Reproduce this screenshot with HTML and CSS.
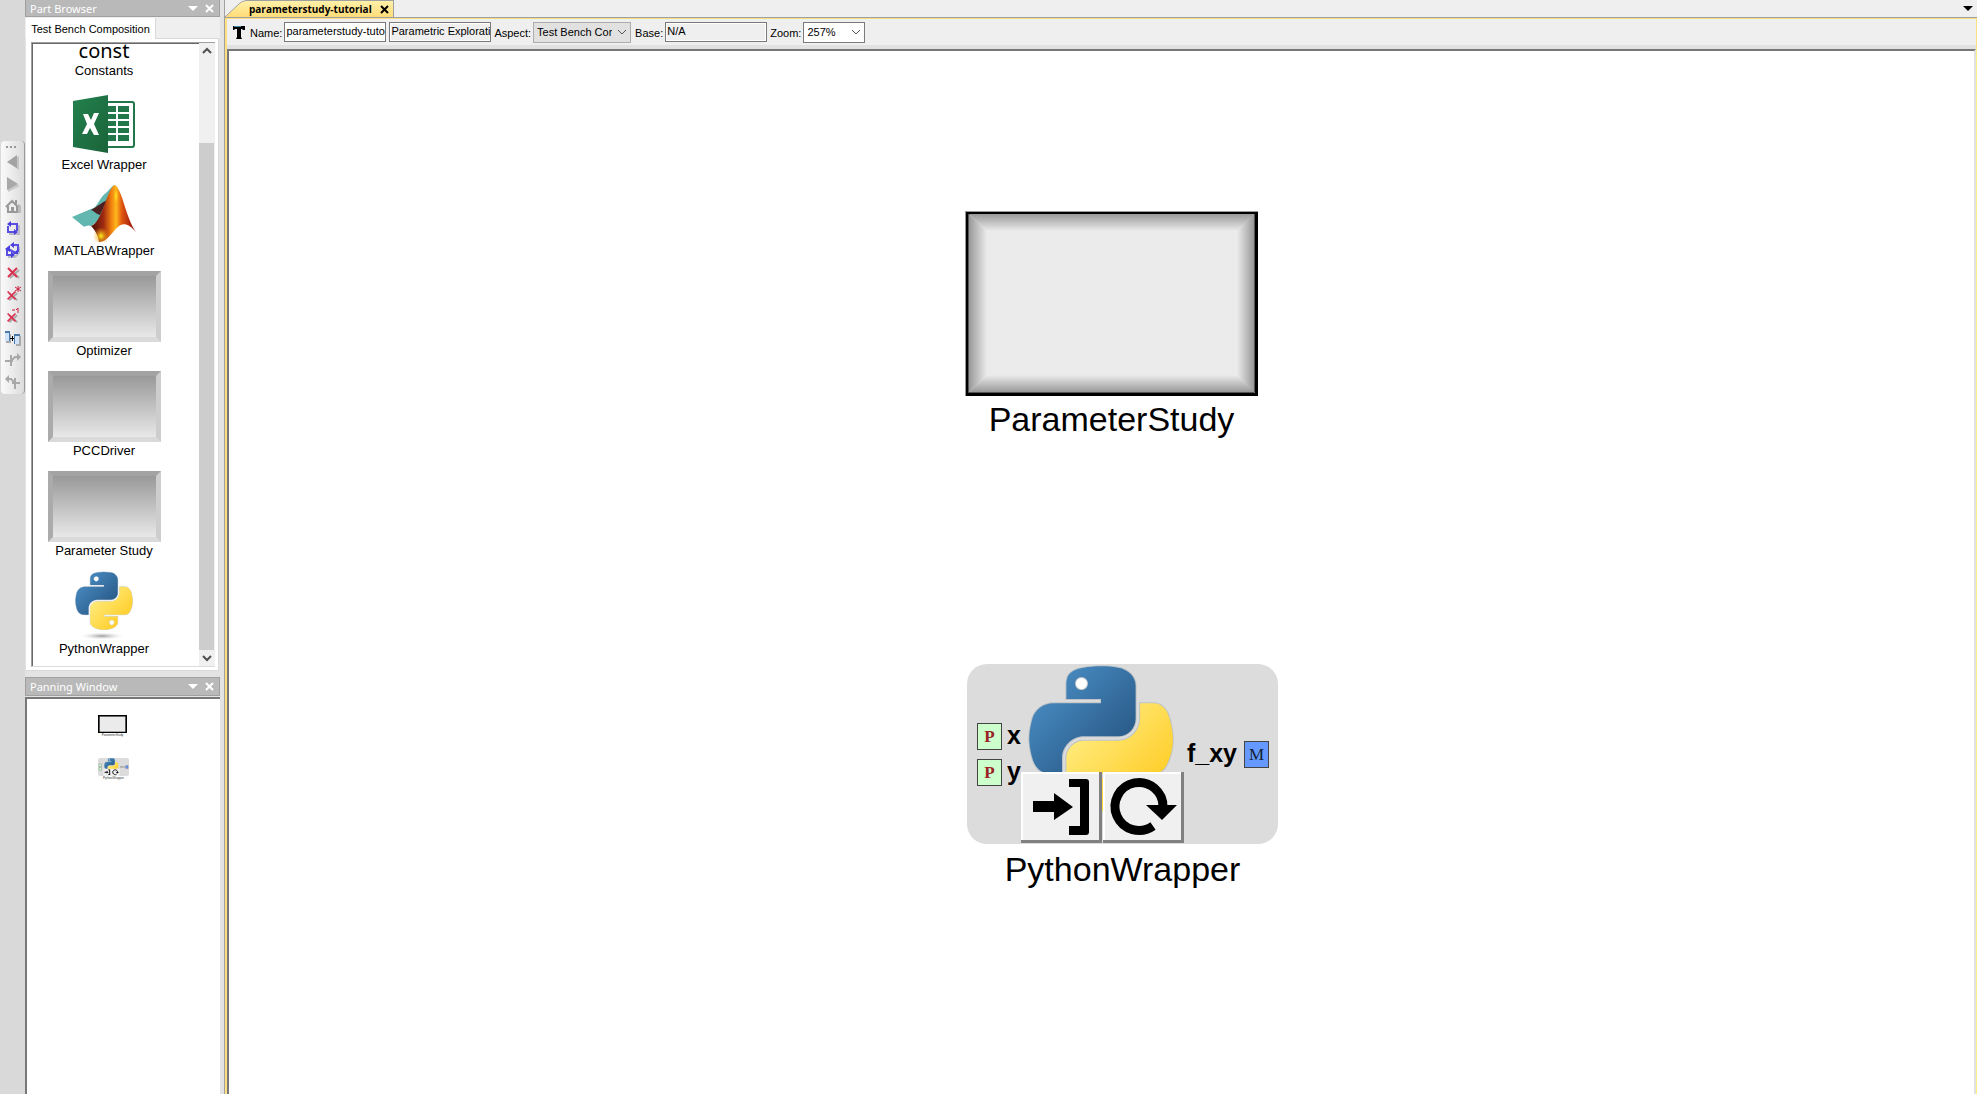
FILE: index.html
```html
<!DOCTYPE html>
<html lang="en">
<head>
<meta charset="utf-8">
<title>parameterstudy-tutorial</title>
<link rel="stylesheet" href="styles.css">
</head>
<body>
<svg class="defs" aria-hidden="true">
  <defs>
    <linearGradient id="blue" x1="0" y1="0" x2="1" y2="1"><stop offset=".1" stop-color="#4b8fc6"/><stop offset=".75" stop-color="#2c5f8e"/></linearGradient>
    <linearGradient id="yellow" x1="0" y1="0" x2="1" y2="1"><stop offset=".15" stop-color="#ffec80"/><stop offset=".75" stop-color="#ffd030"/></linearGradient>
    <linearGradient id="excel" x1="0" y1="0" x2="1" y2="1"><stop offset="0" stop-color="#22814d"/><stop offset="1" stop-color="#1b633a"/></linearGradient>
    <linearGradient id="peak" x1="0" x2="1" y1="0" y2="0"><stop offset="0" stop-color="#4a100c"/><stop offset=".28" stop-color="#a02a10"/><stop offset=".45" stop-color="#f08010"/><stop offset=".56" stop-color="#ffb81c"/><stop offset=".68" stop-color="#e05a10"/><stop offset=".85" stop-color="#b52a10"/><stop offset="1" stop-color="#8c1c10"/></linearGradient>
    <radialGradient id="glow"><stop offset="0" stop-color="#fff020"/><stop offset="1" stop-color="#ff9010" stop-opacity="0"/></radialGradient>
    <radialGradient id="shade"><stop offset="0" stop-color="#999"/><stop offset="1" stop-color="#fff" stop-opacity="0"/></radialGradient>
    <linearGradient id="edgeT" x1="0" y1="0" x2="0" y2="1"><stop offset="0" stop-color="#999"/><stop offset="1" stop-color="#ebebeb"/></linearGradient>
    <linearGradient id="edgeB" x1="0" y1="1" x2="0" y2="0"><stop offset="0" stop-color="#999"/><stop offset="1" stop-color="#ebebeb"/></linearGradient>
    <linearGradient id="edgeL" x1="0" y1="0" x2="1" y2="0"><stop offset="0" stop-color="#999"/><stop offset="1" stop-color="#ebebeb"/></linearGradient>
    <linearGradient id="edgeR" x1="1" y1="0" x2="0" y2="0"><stop offset="0" stop-color="#999"/><stop offset="1" stop-color="#ebebeb"/></linearGradient>
    <symbol id="python" viewBox="-1 -1 113 113">
      <circle cx="40.400" cy="13.300" r="6" fill="#fff"/><circle cx="70.600" cy="98.400" r="6" fill="#fff"/>
      <g stroke="#bdc3c8" stroke-width="1.500" paint-order="stroke">
      <path fill="url(#blue)" d="M54.919 0C50.335.022 45.958.413 42.106 1.095 30.760 3.099 28.700 7.295 28.700 15.032v10.219h26.813v3.406H18.638c-7.793 0-14.616 4.684-16.750 13.594-2.462 10.213-2.571 16.586 0 27.250 1.906 7.938 6.457 13.594 14.250 13.594h9.219v-12.250c0-8.850 7.657-16.656 16.750-16.656h26.781c7.455 0 13.406-6.138 13.406-13.625V15.032c0-7.266-6.130-12.725-13.406-13.937C64.282.328 59.502-.02 54.919 0zm-14.500 8.220c2.770 0 5.031 2.298 5.031 5.124 0 2.817-2.261 5.094-5.031 5.094-2.779 0-5.031-2.277-5.031-5.094 0-2.826 2.252-5.125 5.031-5.125z"/>
      <path fill="url(#yellow)" d="M85.638 28.657v11.906c0 9.231-7.826 17-16.750 17H42.106c-7.336 0-13.406 6.279-13.406 13.625v25.531c0 7.267 6.319 11.541 13.406 13.625 8.488 2.496 16.626 2.947 26.782 0 6.750-1.954 13.406-5.887 13.406-13.625V86.501H55.513v-3.406H95.700c7.792 0 10.696-5.436 13.406-13.594 2.799-8.399 2.680-16.476 0-27.250-1.926-7.757-5.604-13.594-13.406-13.594zm-15.063 64.656c2.780 0 5.031 2.278 5.031 5.094 0 2.827-2.251 5.125-5.031 5.125-2.770 0-5.031-2.298-5.031-5.125 0-2.816 2.261-5.094 5.031-5.094z"/>
      </g>
    </symbol>
    <symbol id="bevel" viewBox="0 0 293 185">
      <path fill="#999" d="M0 0h293v185H0z"/><path d="M1 1h292v184H1z"/>
      <path fill="#ebebeb" d="M4 4h286v178H4z"/>
      <path fill="url(#edgeT)" d="M4 3h286l-18 17H22z"/><path fill="url(#edgeB)" d="M4 181h286l-18-17H22z"/>
      <path fill="url(#edgeL)" d="M4 3v178l18-17V20z"/><path fill="url(#edgeR)" d="M289 3v178l-17-17V20z"/>
      <path fill="none" stroke="#555" d="M3.500 3v178.500h286V3"/>
    </symbol>
    <symbol id="enter" viewBox="0 0 81 71"><path d="M12 29h21v-8l19 14-19 13v-8H12zM48 7h17q3 0 3 3v50q0 3-3 3H48v-9h11V15H48z"/></symbol>
    <symbol id="cycle" viewBox="0 0 81 71"><path fill="none" stroke="#000" stroke-width="9" d="M50 54A24 24 0 1 1 60 35"/><path d="M43 33h31L59 48z"/></symbol>
    <symbol id="cross" viewBox="0 0 16 16"><path fill="none" stroke="#aaa" stroke-width="2" d="M5 6l9 8M14 6l-9 8"/><path fill="none" stroke="#dc3050" stroke-width="2" d="M3 4l9 9M12 4l-9 9"/></symbol>
    <symbol id="close" viewBox="0 0 9 9"><path fill="none" stroke="currentColor" stroke-width="2" d="M1 1l7 7M8 1L1 8"/></symbol>
    <symbol id="down" viewBox="0 0 10 5"><path fill="currentColor" d="M0 0h10L5 5z"/></symbol>
  </defs>
</svg>

<div class="app">
  <div class="gutter">
    <div class="tools" role="toolbar" aria-label="Navigation">
      <span class="grip"><i></i><i></i><i></i></span>
      <button aria-label="Back"><svg viewBox="0 0 16 16"><path fill="#c4c4c4" d="M14 2v14L4 9z"/><path fill="#a3a3a3" d="M12 1v13L2 8z"/></svg></button>
      <button aria-label="Forward"><svg viewBox="0 0 16 16"><path fill="#c9c9c9" d="M3 3v13l12-6z"/><path fill="#a8a8a8" d="M2 1v13l11-6z"/></svg></button>
      <button aria-label="Home"><svg viewBox="0 0 16 16"><path fill="#bbb" d="M4 15h12V8l-2-2z"/><path fill="#eee" stroke="#999" stroke-width="2" d="M3 8v6h9V8L7 3 1 9M7 3l6 6M11 6V2"/><path fill="#999" d="M6 9h3v5H6z"/></svg></button>
      <button aria-label="Refresh"><svg viewBox="0 0 16 16"><path fill="none" stroke="#b9b9c8" stroke-width="2" d="M4 14h10V5"/><path fill="none" stroke="#5a4fe0" stroke-width="2" d="M5 4h7v7M3 6v6h8"/><path fill="#4a3fdc" d="M2 4l4-3v6zM13 12L9 9v6z"/></svg></button>
      <button aria-label="Refresh all"><svg viewBox="0 0 16 16"><path fill="none" stroke="#b9b9c8" stroke-width="2" d="M3 15h7l4-4V5"/><path fill="none" stroke="#5a4fe0" stroke-width="2" d="M7 3h6v7M2 7v6h6M3 7l8 4"/><path fill="#4a3fdc" d="M5 3l4-3v6zM0 7l5-4v7zM13 12H8l5-5zM10 13l-4-4v7z"/></svg></button>
      <button aria-label="Delete"><svg><use href="#cross"/></svg></button>
      <button aria-label="Delete all"><svg viewBox="0 0 16 16"><use href="#cross" y="2" width="14" height="14"/><path stroke="#d02040" d="M13 0v6M10 1l6 4M16 1l-6 4"/></svg></button>
      <button aria-label="Delete last"><svg viewBox="0 0 16 16"><use href="#cross" y="2" width="14" height="14"/><path fill="none" stroke="#d02040" d="M7 2h3M11 2l2-2v5"/></svg></button>
      <button aria-label="Connect"><svg viewBox="0 0 16 16"><path fill="#aaa" d="M1 4h5v9H1zM11 6h5v10h-5z"/><path fill="#cfe2f8" d="M0 2h4v9H0zM10 5h4v9h-4z"/><path fill="#4a78a8" d="M0 1h5v2H0zM9 4h6v2H9zM4 2h1v9H4zM9 5h1v9H9z"/><path stroke="#000" d="M5 8.500h4M7.500 6v5"/></svg></button>
      <button aria-label="Connect right"><svg viewBox="0 0 16 16"><path fill="none" stroke="#a8a8a8" stroke-width="2" d="M0 9h8M6 3v11M7 8l3-3h3"/><path fill="#a8a8a8" d="M16 5l-4-4v8z"/></svg></button>
      <button aria-label="Connect left"><svg viewBox="0 0 16 16"><path fill="none" stroke="#a8a8a8" stroke-width="2" d="M7 9h8M10 4v11M9 8L6 5H2"/><path fill="#a8a8a8" d="M0 5l4-4v8z"/></svg></button>
    </div>
  </div>

  <aside class="dock">
    <section class="browser">
      <header class="caption"><h2>Part Browser</h2><button aria-label="Part Browser menu"><svg class="tri"><use href="#down"/></svg></button><button aria-label="Close Part Browser"><svg class="x"><use href="#close"/></svg></button></header>
      <div class="tabs"><button class="tab">Test Bench Composition</button></div>
      <div class="frame">
        <div class="list">
          <ul class="parts">
            <li><span class="const">const</span><span>Constants</span></li>
            <li><svg class="excel" viewBox="0 0 62 65">
              <path fill="#fff" stroke="#21774a" stroke-width="2" d="M34 11h25q2 0 2 2v41q0 2-2 2H34z"/>
              <path fill="#21774a" d="M34 15h9v6h-9zM45 15h11v6H45zM34 23h9v5h-9zM45 23h11v5H45zM34 30h9v5h-9zM45 30h11v5H45zM34 37h9v5h-9zM45 37h11v5H45zM34 44h9v6h-9zM45 44h11v6H45z"/>
              <path fill="url(#excel)" d="M0 10l35-6v58L0 56z"/>
              <path fill="#fff" d="M10 23h5l3 6 3-7h5l-5 11 5 11h-5l-4-7-3 6H9l5-10z"/></svg><span>Excel Wrapper</span></li>
            <li><svg class="matlab" viewBox="0 0 64 57">
              <path fill="#62b8b0" d="M0 32l19-8c7-1 8-12 16-17C39 3 41 0 43 0l-6 17-8 17-10 7c-4-2-6 2-8 0z"/>
              <path fill="#4c2020" d="M19 25c7-4 10-7 16-10l-7 15c-4-1-6-4-9-5z"/>
              <path fill="url(#peak)" d="M43 0c8 6 10 31 21 47-7-8-13-10-18-5-7 6-11 15-19 15-1-7-4-12-8-16 12-4 16-39 24-41z"/>
              <ellipse cx="29" cy="51" rx="8" ry="9" fill="url(#glow)"/><ellipse cx="44" cy="11" rx="3" ry="11" fill="url(#glow)"/></svg><span>MATLABWrapper</span></li>
            <li><i class="box"></i><span>Optimizer</span></li>
            <li><i class="box"></i><span>PCCDriver</span></li>
            <li><i class="box"></i><span>Parameter Study</span></li>
            <li><svg class="snake" viewBox="0 0 58 69"><use href="#python" width="58" height="59"/><ellipse cx="27" cy="65" rx="24" ry="4" fill="url(#shade)"/></svg><span>PythonWrapper</span></li>
          </ul>
          <div class="scroll"><svg viewBox="0 0 15 16"><path d="M4 10l4-4 4 4"/></svg><i class="thumb"></i><svg viewBox="0 0 15 16"><path d="M4 6l4 4 4-4"/></svg></div>
        </div>
      </div>
    </section>
    <section class="panning">
      <header class="caption"><h2>Panning Window</h2><button aria-label="Panning Window menu"><svg class="tri"><use href="#down"/></svg></button><button aria-label="Close Panning Window"><svg class="x"><use href="#close"/></svg></button></header>
      <div class="overview">
        <div class="mini mini-study"><svg viewBox="0 0 293 185"><use href="#bevel"/><path fill="none" stroke="#000" stroke-width="16" d="M8 8h277v169H8z"/></svg><span>ParameterStudy</span></div>
        <div class="mini mini-python"><svg viewBox="0 0 311 180"><rect width="311" height="180" rx="20" fill="#dcdcdc"/><use href="#python" x="61" y="1" width="146" height="146"/><path fill="#cfc" stroke="#555" stroke-width="3" d="M10 59h25v27H10zM10 95h25v27H10z"/><path fill="#69f" stroke="#444" stroke-width="3" d="M278 77h24v27h-24z"/><path stroke="#777" stroke-width="8" d="M220 90h50"/><path fill="#f0f0f0" d="M54 108h163v71H54z"/><use href="#enter" x="54" y="108" width="81" height="71"/><use href="#cycle" x="136" y="108" width="81" height="71"/></svg><span>PythonWrapper</span></div>
      </div>
    </section>
  </aside>

  <main class="document">
    <div class="doc-tabs">
      <div class="doc-tab"><svg class="slope" viewBox="0 0 20 17"><defs><linearGradient id="tabfill" x1="0" y1="0" x2="0" y2="1"><stop offset="0" stop-color="#fff0a8"/><stop offset="1" stop-color="#ffdc78"/></linearGradient></defs><path fill="url(#tabfill)" d="M0 17L15 3q2-2 5-2v16z"/><path fill="none" stroke="#a0a0a0" d="M0 17L15 3q2-2 5-2"/></svg><span class="doc-name">parameterstudy-tutorial<button aria-label="Close document"><svg class="x"><use href="#close"/></svg></button></span></div>
      <button class="more" aria-label="Open documents"><svg class="tri"><use href="#down"/></svg></button>
    </div>
    <form class="props">
      <svg class="type" viewBox="0 0 12 13"><path d="M0 0h12v4h-2l-1-1H8v8l1 2H3l1-2V3H2L1 4H0z"/><path fill="#48a" d="M1 0h7v1H1z"/></svg>
      <label for="name">Name:</label><input id="name" value="parameterstudy-tutorial">
      <input class="dim" aria-label="Kind" value="Parametric Exploration" readonly>
      <label for="aspect">Aspect:</label><span class="pick dim"><select id="aspect"><option>Test Bench Composition</option></select><svg viewBox="0 0 9 5"><path d="M1 0l4 4 4-4"/></svg></span>
      <label for="base">Base:</label><input id="base" class="dim" value="N/A" readonly>
      <label for="zoom">Zoom:</label><span class="pick zoom"><select id="zoom"><option>257%</option></select><svg viewBox="0 0 9 5"><path d="M1 0l4 4 4-4"/></svg></span>
    </form>
    <div class="canvas">
      <div class="node study"><svg viewBox="0 0 293 185"><use href="#bevel"/></svg><span class="title">ParameterStudy</span></div>
      <div class="node wrapper">
        <div class="body">
          <svg class="logo"><use href="#python"/></svg>
          <div class="ports"><span class="port"><b class="pin">P</b>x</span><span class="port"><b class="pin">P</b>y</span></div>
          <span class="port out">f_xy<b class="pin metric">M</b></span>
          <div class="actions"><button aria-label="Open"><svg><use href="#enter"/></svg></button><button aria-label="Reload"><svg><use href="#cycle"/></svg></button></div>
        </div>
        <span class="title">PythonWrapper</span>
      </div>
    </div>
  </main>
</div>
</body>
</html>
```
FILE: styles.css
```css
* { box-sizing: border-box; }
body { margin: 0; font: 11px/14px "Liberation Sans", Arial, sans-serif; color: #000; background: #d9d9d9; }
button { border: 0; padding: 0; background: none; color: inherit; font: inherit; display: block; }
svg { display: block; }
h2 { margin: 0; font: inherit; }
.defs { position: absolute; width: 0; height: 0; }

.app { display: grid; grid-template-columns: 25px 199px 1fr; height: 100vh; overflow: hidden; }

/* vertical tool strip */
.gutter { padding: 141px 0 0 1px; }
.tools { height: 253px; padding: 5px 3px 0 4px; border-right: 1px solid #999; border-radius: 4px; background: linear-gradient(90deg, #fafafa, #dcdcdc); display: flex; flex-direction: column; }
.tools button { height: 22px; display: flex; align-items: center; }
.tools svg { width: 16px; height: 16px; }
.grip { display: flex; gap: 2px; padding-left: 1px; height: 5px; }
.grip i { width: 2px; height: 2px; background: #999; }

/* docked panels */
.dock { display: flex; flex-direction: column; padding-right: 4px; background: #e3e3e3; min-height: 0; }
.browser { margin-bottom: 6px; }
.caption { height: 19px; display: flex; align-items: center; gap: 7px; padding: 0 5px 0 4px; border: 1px solid #a0a0a0; background: #b9b9b9; color: #fff; font: 11px/15px "Noto Sans", sans-serif; }
.browser .caption { height: 17px; border-top: 0; }
.caption h2 { flex: 1; }
.tri { width: 10px; height: 5px; }
.x { width: 9px; height: 9px; }
.tabs { padding: 1px 0 0 1px; height: 21px; background: #efefef; }
.tab { position: relative; width: 130px; height: 21px; background: #fff; border-right: 1px solid #d9d9d9; white-space: nowrap; }
.frame { margin: 0 1px; padding: 3px; background: #fff; border: 1px solid #d9d9d9; border-left: 0; }
.list { margin-left: 2px; display: flex; height: 625px; border: solid #a0a0a0; border-width: 1px 0 0 1px; border-bottom: 1px solid #ddd; }
.parts { flex: 1; margin: 0; padding: 1px 24px 0 0; list-style: none; border: solid #696969; border-width: 1px 0 0 1px; display: flex; flex-direction: column; gap: 11px; font-size: 13px; line-height: 18px; overflow: hidden; }
.parts li { display: flex; flex-direction: column; align-items: center; }
.const { height: 17px; font: 20px/12px "Noto Sans", sans-serif; }
.excel { width: 62px; height: 65px; }
.matlab { width: 64px; height: 57px; }
.snake { width: 58px; height: 69px; }
.box { width: 113px; height: 71px; border: 5px solid; border-color: #a3a3a3 #cdcdcd #dadada #ababab; background: linear-gradient(#999, #e8e8e8); }
.scroll { width: 16px; display: flex; flex-direction: column; background: #f0f0f0; }
.scroll svg { height: 16px; width: 15px; }
.scroll path { fill: none; stroke: #505050; stroke-width: 2; }
.thumb { flex: 1; margin-top: 84px; background: #cdcdcd; width: 15px; }
.panning { flex: 1; display: flex; flex-direction: column; }
.overview { flex: 1; position: relative; margin-top: 1px; background: #fff; border: 2px solid #777; border-width: 2px 0 0 2px; }
.mini { position: absolute; font-size: 3px; line-height: 4px; text-align: center; color: #333; }
.mini span { display: block; }
.mini svg { width: 100%; }
.mini-study { left: 71px; top: 16px; width: 29px; }
.mini-python { left: 71px; top: 59px; width: 31px; }

/* document area */
.document { display: flex; flex-direction: column; min-width: 0; border-left: 1px solid #a0a0a0; background: #efefef; }
.doc-tabs { display: flex; height: 18px; justify-content: space-between; border-bottom: 1px solid #a0a0a0; }
.doc-tab { display: flex; }
.slope { width: 20px; height: 17px; }
.doc-name { display: flex; align-items: center; gap: 8px; height: 17px; padding: 0 4px; border: solid #a0a0a0; border-width: 1px 1px 0 0; background: linear-gradient(#fff0a8, #ffdc78); font: bold 10px/14px "Open Sans", sans-serif; white-space: nowrap; }
.more { padding-right: 4px; }
.props { display: flex; align-items: center; height: 31px; padding: 0 6px 4px; border: solid #ffe080; border-width: 1px 1px 0 2px; box-shadow: inset 0 -4px #e1e1e1; }
.type { width: 12px; height: 13px; margin-right: 5px; }
.props label { padding: 2px 2px 0 0; white-space: nowrap; }
.props input { width: 102px; height: 20px; margin-right: 3px; padding: 0 0 2px 1px; border: 1px solid #7a7a7a; border-radius: 0; font: inherit; outline: 0; background: #fff; }
.props input.dim { background: #efefef; box-shadow: inset 0 0 0 1px #fff; }
.pick { position: relative; width: 98px; height: 21px; margin-right: 4px; border: 1px solid #adadad; background: #e1e1e1; }
.pick select { appearance: none; width: 78px; height: 19px; margin: 0; padding: 0 0 0 3px; border: 0; background: none; font: inherit; color: #000; overflow: hidden; }
.pick svg { position: absolute; right: 4px; top: 7px; width: 9px; height: 5px; }
.pick path { fill: none; stroke: #555; }
.pick.zoom { width: 62px; background: #fff; border-color: #7a7a7a; }
.pick.zoom select { width: 42px; }

.canvas { position: relative; flex: 1; margin: 0 1px 0 2px; border: solid #777; border-width: 2px 2px 0 2px; border-right-color: #e1e1e1; background: #fff; box-shadow: -2px 0 #ffe080, 1px 0 #fff080; overflow: clip; overflow-clip-margin: 3px; }
.node { position: absolute; }
.title { display: block; text-align: center; font-size: 34px; line-height: 46px; }
.study { left: 736px; top: 160px; width: 293px; }
.wrapper { left: 738px; top: 613px; width: 311px; }
.wrapper .title { line-height: 50px; }
.body { position: relative; height: 180px; border-radius: 20px; background: #dcdcdc; }
.logo { position: absolute; left: 61px; top: 1px; width: 146px; height: 146px; }
.ports { position: absolute; left: 10px; top: 59px; display: flex; flex-direction: column; gap: 9px; }
.port { display: flex; align-items: flex-start; gap: 5px; height: 27px; font-weight: bold; font-size: 25px; line-height: 24px; }
.out { position: absolute; right: 9px; top: 77px; gap: 7px; }
.pin { width: 25px; height: 27px; border: 1px solid #444; background: #cfc; color: #922; font: bold 17px/25px "Liberation Serif", serif; text-align: center; }
.metric { background: #69f; color: #123; font-weight: normal; }
.actions { position: absolute; left: 54px; top: 108px; display: flex; gap: 1px; }
.actions button { width: 81px; height: 71px; background: #f0f0f0; box-shadow: inset -3px -3px #808080, inset 2px 2px #fff; }
.actions svg { width: 81px; height: 71px; }
```
